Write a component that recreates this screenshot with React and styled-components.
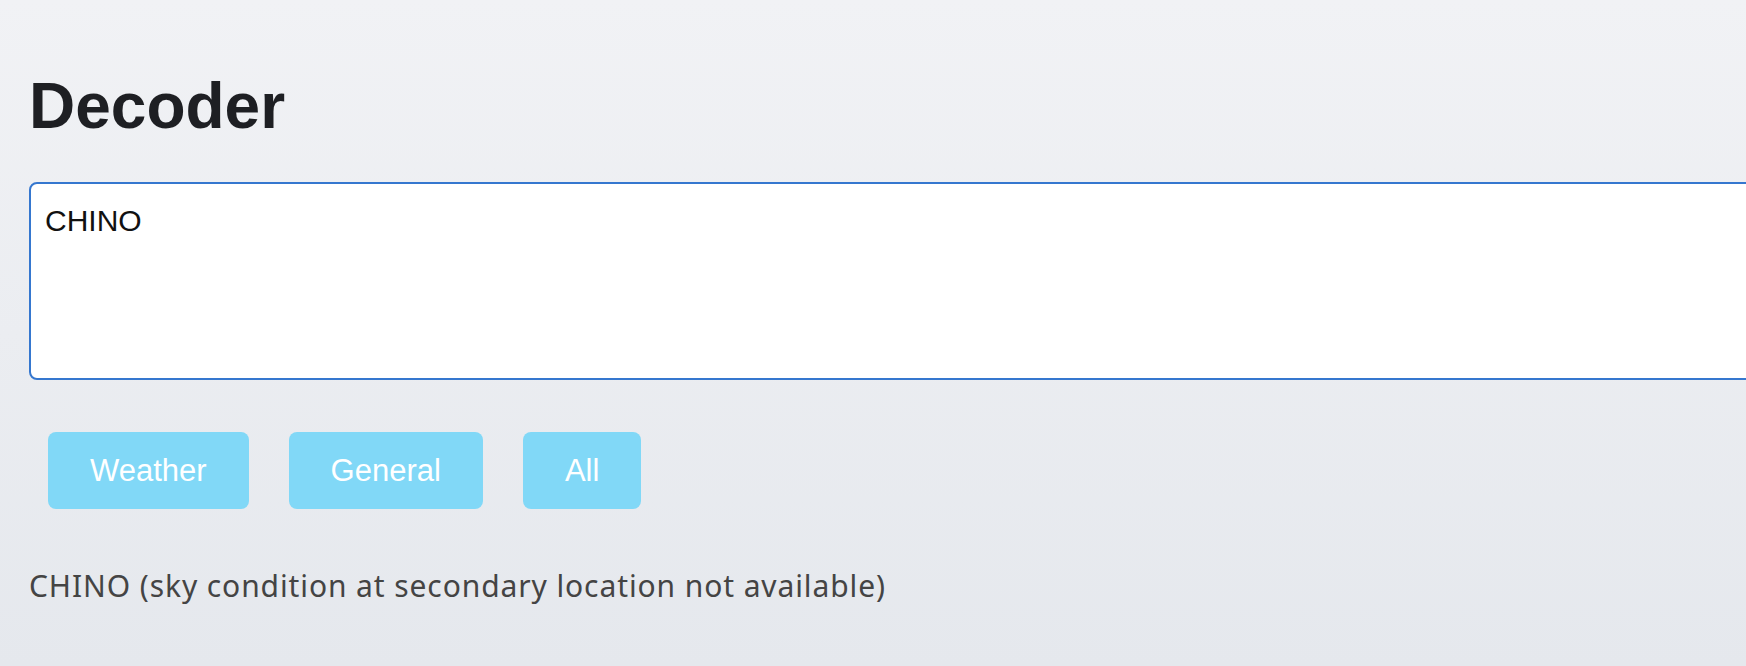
import React, { useState } from 'react'
import styled, { createGlobalStyle } from 'styled-components'

const GlobalStyle = createGlobalStyle`
    html, body {
        margin: 0;
        padding: 0;
        overflow: hidden;
    }
    body {
        font-family: "Liberation Sans", Arial, Helvetica, sans-serif;
    }
`;

const Page = styled.div`
    min-height: 666px;
    width: 100vw;
    padding: 69px 0 0 29px;
    box-sizing: border-box;
    background: linear-gradient(180deg, #f1f2f5 0%, #e5e8ed 100%);
`;

const Title = styled.h1`
    margin: 0;
    font-size: 64px;
    line-height: 74px;
    font-weight: 700;
    color: #1e1f23;
`;

const Input = styled.textarea`
    display: block;
    margin-top: 39px;
    width: 1760px;
    height: 198px;
    padding: 20px 14px;
    box-sizing: border-box;
    border: 2px solid #3577cf;
    border-radius: 8px;
    background: #fff;
    font-family: "Liberation Sans", Arial, sans-serif;
    font-size: 30px;
    line-height: 34px;
    color: #111;
    resize: none;
    outline: none;
`;

const Buttons = styled.div`
    display: flex;
    margin-top: 52px;
`;

const Button = styled.button`
    margin: 0 20px 0 ${p => (p.$first ? '19px' : '20px')};
    padding: 20px 42px;
    border: none;
    border-radius: 8px;
    background-color: #81d8f7;
    color: #fff;
    font-family: "Liberation Sans", Arial, sans-serif;
    font-size: 31px;
    line-height: 37px;
    cursor: pointer;
`;

const Result = styled.p`
    margin: 57px 0 0;
    font-family: "Noto Sans", "Open Sans", sans-serif;
    font-size: 30px;
    line-height: 40px;
    letter-spacing: 0.9px;
    color: #444;
`;

export default function App() {
  const [text, setText] = useState('CHINO')

  return (
    <>
      <GlobalStyle />
      <Page>
        <Title>Decoder</Title>
        <Input value={text} onChange={e => setText(e.target.value)} />
        <Buttons>
          <Button $first>Weather</Button>
          <Button>General</Button>
          <Button>All</Button>
        </Buttons>
        <Result>CHINO (sky condition at secondary location not available)</Result>
      </Page>
    </>
  )
}
